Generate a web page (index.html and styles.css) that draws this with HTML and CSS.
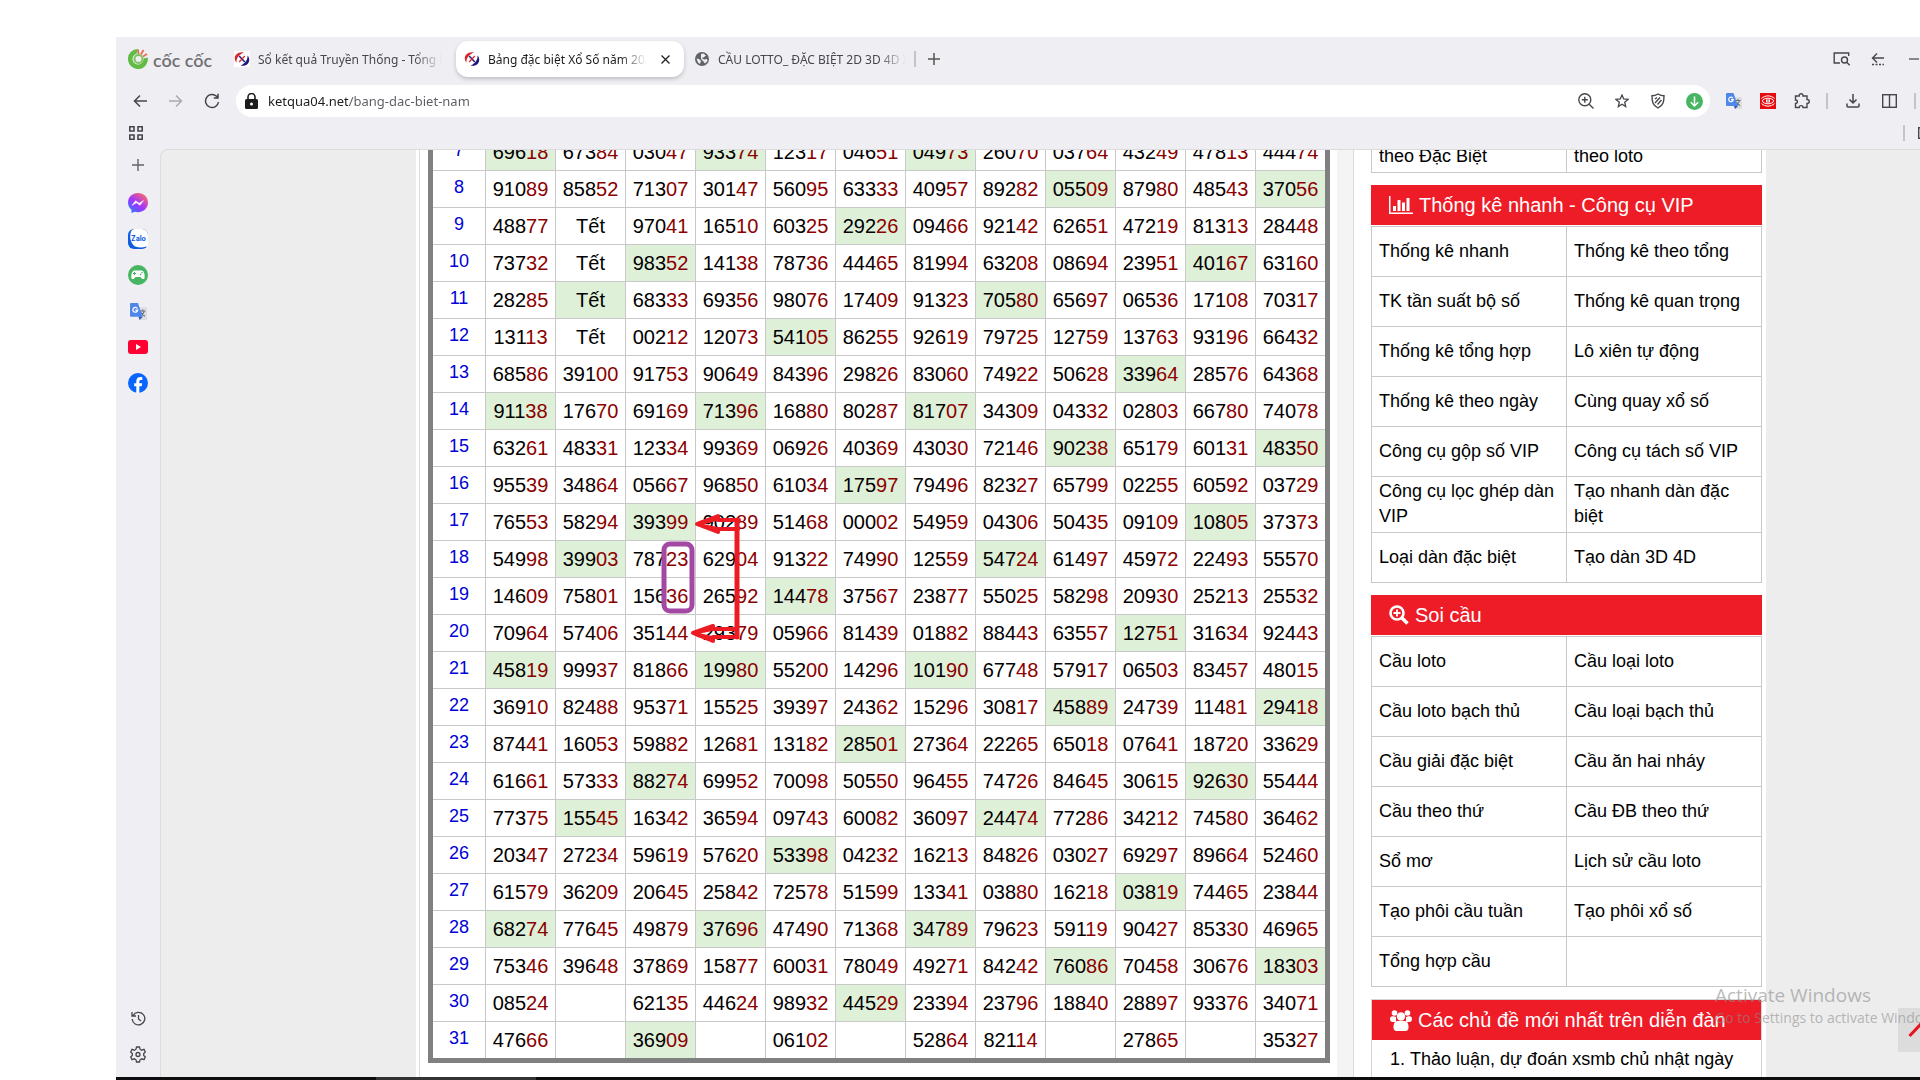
FILE: index.html
```html
<!DOCTYPE html>
<html lang="vi">
<head>
<meta charset="utf-8">
<title>Bảng đặc biệt Xổ Số năm</title>
<link rel="stylesheet" href="styles.css">
</head>
<body>
<svg class="sprite" aria-hidden="true">
  <symbol id="translate" viewBox="0 0 16 16">
    <path d="M6 4h9a1 1 0 0 1 1 1v10a1 1 0 0 1-1 1H9z" fill="#dcdde0"/>
    <path d="M9.500 7.500h5M12 6v1.500M13.500 7.500c-.5 2.500-2 4-3.500 5M10.500 9c.8 1.500 2 2.800 3.500 3.500" stroke="#6b7078" stroke-width="1.100" fill="none"/>
    <path d="M1 0h6.500L12 13H1a1 1 0 0 1-1-1V1a1 1 0 0 1 1-1z" fill="#4f86ec"/>
    <path d="M8 13h4l-3 3z" fill="#2f55b8"/>
    <path d="M7 5.200A2.300 2.300 0 1 0 7.300 6.700H5" stroke="#fff" stroke-width="1.200" fill="none"/>
  </symbol>
  <symbol id="kq" viewBox="0 0 16 16">
    <rect width="16" height="16" fill="#fff"/>
    <path d="M10 1.500C5 0 .5 3.500.8 7.500c0 1.500.7 3 1.700 4C2 8 4.500 3.500 10 1.500z" fill="#d8262c"/>
    <path d="M6.500 14.500c5 1.500 9-2 8.700-6 0-1.500-.7-3-1.700-4C14 8 11.500 12.500 6.500 14.500z" fill="#1f1a78"/>
    <path d="M5.200 5l5.600 6" stroke="#2b2580" stroke-width="1.600"/><path d="M10.800 5l-5.600 6" stroke="#d8262c" stroke-width="1.200"/>
  </symbol>
</svg>
<div class="browser">
  <header class="chrome">
    <div class="tabs">
      <div class="brand">
        <svg width="20" height="20" viewBox="0 0 20 20"><path d="M10 0a10 10 0 1 0 9.800 8.500l-4.300 1A5.500 5.500 0 1 1 8.500 4.700z" fill="#62bb46"/><circle cx="10.500" cy="10" r="4" fill="none" stroke="#7cc55d" stroke-width="2"/><path d="M10.500 5L10 .5M13 5.500L15.500 1M15 7.500l4-2.500" stroke="#ee6b4d" stroke-width="1.800"/></svg>
        <span class="brand-name">cốc cốc</span>
      </div>
      <a class="tab" href="#"><svg width="16" height="16"><use href="#kq"/></svg><span class="tab-title">Sổ kết quả Truyền Thống - Tổng hợp</span></a>
      <a class="tab tab-active" href="#"><svg width="16" height="16"><use href="#kq"/></svg><span class="tab-title">Bảng đặc biệt Xổ Số năm 2024</span>
        <svg class="tab-close" width="9" height="9" viewBox="0 0 9 9"><path d="M.5.5l8 8M8.500.5l-8 8" stroke="#222" stroke-width="1.300"/></svg></a>
      <a class="tab tab-last" href="#"><svg width="14" height="14" viewBox="0 0 14 14"><circle cx="7" cy="7" r="7" fill="#5f6368"/><path d="M1.500 6.500l2.500.5 2 2-1 3-2-1.500zM6 2l2.500-.5L11 3.500 8.500 5.500l-2 .5L9 7.500 12 7l.5 2-2.500 2.500-1.500-2L6 7z" fill="#efeef3"/></svg><span class="tab-title">CẦU LOTTO_ ĐẶC BIỆT 2D 3D 4D XSMB</span></a>
      <span class="bar"></span>
      <button class="icon-btn" aria-label="Thẻ mới"><svg width="12" height="12" viewBox="0 0 12 12"><path d="M6 0v12M0 6h12" stroke="#555" stroke-width="1.500"/></svg></button>
      <div class="window-tools">
        <button class="icon-btn" aria-label="Tìm thẻ"><svg width="18" height="14" viewBox="0 0 18 14" fill="none" stroke="#45474d" stroke-width="1.400"><path d="M7 11H1.200V1h14.500v3"/><circle cx="11.500" cy="8" r="3"/><path d="M13.700 10.200l3 3"/></svg></button>
        <button class="icon-btn" aria-label="Thu gọn"><svg width="14" height="14" viewBox="0 0 14 14" fill="none" stroke="#45474d" stroke-width="1.400"><path d="M13 6H1.500M6 1.500L1.500 6 6 10.500"/><path d="M1 12.500h12" stroke-dasharray="2 1.500"/></svg></button>
        <button class="icon-btn" aria-label="Thu nhỏ"><svg width="10" height="2"><path d="M0 1h10" stroke="#222" stroke-width="1"/></svg></button>
      </div>
    </div>
    <div class="toolbar">
      <button class="icon-btn" aria-label="Quay lại"><svg width="14" height="12" viewBox="0 0 14 12" fill="none" stroke="#45474d" stroke-width="1.500"><path d="M14 6H1.500M7 .5L1.500 6 7 11.500"/></svg></button>
      <button class="icon-btn" aria-label="Tiến"><svg width="14" height="12" viewBox="0 0 14 12" fill="none" stroke="#a9aaae" stroke-width="1.500"><path d="M0 6h12.500M7 .5L12.500 6 7 11.500"/></svg></button>
      <button class="icon-btn" aria-label="Tải lại"><svg width="16" height="16" viewBox="0 0 16 16" fill="none" stroke="#45474d" stroke-width="1.500"><path d="M14.500 9A6.500 6.500 0 1 1 12.500 3.300L14 5M14 .8V5H9.800"/></svg></button>
      <div class="address">
        <svg width="13" height="16" viewBox="0 0 13 16"><rect y="6" width="13" height="10" rx="1.500" fill="#1c1c1f"/><path d="M3 6V4a3.500 3.500 0 0 1 7 0v2" fill="none" stroke="#1c1c1f" stroke-width="1.600"/><circle cx="6.500" cy="11" r="1.500" fill="#fff"/></svg>
        <input class="url" type="text" value="ketqua04.net/bang-dac-biet-nam" aria-label="Địa chỉ">
        <button aria-label="Thu phóng"><svg width="16" height="16" viewBox="0 0 16 16" fill="none" stroke="#45474d" stroke-width="1.400"><circle cx="6.800" cy="6.800" r="6"/><path d="M11.200 11.200l4.300 4.300M3.800 6.800h6M6.800 3.800v6"/></svg></button>
        <button aria-label="Đánh dấu"><svg width="14" height="14" viewBox="0 0 14 14" fill="none" stroke="#45474d" stroke-width="1.300"><path d="M7 1l1.700 4 4.300.4-3.300 2.800 1 4.300L7 10.200l-3.700 2.300 1-4.300L1 5.400 5.300 5z"/></svg></button>
        <button aria-label="Bảo vệ"><svg width="14" height="16" viewBox="0 0 14 16" fill="none" stroke="#45474d" stroke-width="1.400"><path d="M7 1c2 1.300 4 1.800 6 1.800 0 5.700-.5 9.200-6 12.200C1.500 12 1 8.500 1 2.800 3 2.800 5 2.300 7 1z"/><path d="M4 6l2-1.500M4 10l5-5.500M6.500 11.500L10.500 7"/></svg></button>
        <button aria-label="Tải video"><svg width="17" height="17" viewBox="0 0 17 17"><circle cx="8.500" cy="8.500" r="8.500" fill="#47b562"/><path d="M8.500 3.500v9.500M4.800 9.300l3.700 3.700 3.700-3.700" fill="none" stroke="#fff" stroke-width="1.500"/></svg></button>
      </div>
      <div class="extensions">
        <button aria-label="Dịch"><svg width="16" height="16"><use href="#translate"/></svg></button>
        <button aria-label="Tiện ích"><svg width="16" height="16" viewBox="0 0 16 16"><rect width="16" height="16" fill="#e60b0e"/><g fill="none" stroke="#fff"><path d="M1.500 5.500C5 2 11 2 14.500 5.500M1.500 10.500c3.500 3.500 9.500 3.500 13 0"/><ellipse cx="8" cy="8" rx="5.500" ry="2.800"/><path d="M6.500 6.500v3M8 6v4M9.500 6.500v3"/></g></svg></button>
        <button aria-label="Tiện ích mở rộng"><svg width="16" height="16" viewBox="0 0 16 16" fill="none" stroke="#45474d" stroke-width="1.400"><path d="M1.500 3h3.700c-.3-3 4.100-3 3.800 0h4v3.500c3 0 3 4 0 4v4H9c0-2.500-3.800-2.500-3.800 0H1.500v-4c2.500 0 2.500-3.500 0-3.500z"/></svg></button>
      </div>
      <span class="bar"></span>
      <button class="icon-btn" aria-label="Tải xuống"><svg width="14" height="14" viewBox="0 0 14 14" fill="none" stroke="#45474d" stroke-width="1.500"><path d="M7 0v8.500M3.500 5.500L7 9l3.500-3.500M1 9.500V12a1 1 0 0 0 1 1h10a1 1 0 0 0 1-1V9.500"/></svg></button>
      <button class="icon-btn" aria-label="Chia màn hình"><svg width="15" height="14" viewBox="0 0 15 14" fill="none" stroke="#45474d" stroke-width="1.400"><rect x=".7" y=".7" width="13.600" height="12.600"/><path d="M7.500 0v14"/></svg></button>
      <span class="bar"></span>
    </div>
    <div class="bookmarks">
      <svg width="14" height="14" viewBox="0 0 14 14" fill="none" stroke="#45474d" stroke-width="1.600"><path d="M.8.800h4.200V5H.8zM9 .8h4.200V5H9zM.8 9h4.200v4.200H.8zM9 9h4.200v4.200H9z"/></svg>
      <span class="bar"></span>
      <svg width="2" height="12" viewBox="0 0 2 12"><path d="M4 .7H.7v10.600H4" fill="none" stroke="#45474d" stroke-width="1.400"/></svg>
    </div>
  </header>
  <div class="work">
    <nav class="dock" aria-label="Thanh bên">
      <button aria-label="Thêm"><svg width="12" height="12" viewBox="0 0 12 12"><path d="M6 0v12M0 6h12" stroke="#666" stroke-width="1.400"/></svg></button>
      <button aria-label="Messenger"><svg width="20" height="20" viewBox="0 0 20 20"><defs><linearGradient id="msg" x1="0" y1="1" x2=".8" y2="0"><stop offset="0" stop-color="#1787ff"/><stop offset=".5" stop-color="#a033ff"/><stop offset="1" stop-color="#ff6968"/></linearGradient></defs><path d="M10 0c6 0 10 4.300 10 9.600s-4 9.600-10 9.600c-1 0-2-.2-3-.5L3.500 20V16.800C1.200 15 0 12.500 0 9.600 0 4.300 4 0 10 0z" fill="url(#msg)"/><path d="M4 12.300L7.600 7.700l3.500 2.600 4.400-2.700-3.500 4.700-3.500-2.600z" fill="#fff" stroke="#fff" stroke-width=".5"/></svg></button>
      <button aria-label="Zalo"><svg width="20" height="20" viewBox="0 0 20 20"><rect width="20" height="20" rx="6" fill="#0f5ce0"/><path d="M6 0h8a6 6 0 0 1 6 6v11c-3 1.500-8 2-13 .5C3 15 .5 8 3.500 1.500z" fill="#fff"/><text x="3" y="12" class="zalo">Zalo</text></svg></button>
      <button aria-label="Trò chơi"><svg width="20" height="20" viewBox="0 0 20 20"><circle cx="10" cy="10" r="10" fill="#47b562"/><path d="M6 5.500h8c2.500 1 3 5 2.500 8-1.500 1.500-3 0-4-1.500h-5c-1 1.500-2.500 3-4 1.500-.5-3 0-7 2.500-8z" fill="#fff"/><path d="M5 8.500h3M6.500 7v3" stroke="#47b562"/><circle cx="12.500" cy="9.500" r=".8" fill="#47b562"/><circle cx="14" cy="7.800" r=".8" fill="#47b562"/></svg></button>
      <button aria-label="Google Dịch"><svg width="17" height="17"><use href="#translate"/></svg></button>
      <button aria-label="YouTube"><svg width="20" height="14" viewBox="0 0 20 14"><rect width="20" height="14" rx="3" fill="#ff0033"/><path d="M8 4l5 3-5 3z" fill="#fff"/></svg></button>
      <button aria-label="Facebook"><svg width="20" height="20" viewBox="0 0 20 20"><circle cx="10" cy="10" r="10" fill="#0866ff"/><path d="M8.300 20v-6.800H6.200v-3h2.100V8.500c0-3 1.700-4.400 4.100-4.400.8 0 1.500.1 1.900.2v2.700h-1.300c-1.300 0-1.700.7-1.700 1.700v1.500h2.900l-.5 3h-2.400V20z" fill="#fff"/></svg></button>
      <button class="dock-bottom" aria-label="Lịch sử"><svg width="15" height="15" viewBox="0 0 15 15" fill="none" stroke="#45474d" stroke-width="1.300"><path d="M2 4.500A6.300 6.300 0 1 1 1.200 8M1 1v4h4M7.500 4v4l2.500 2"/></svg></button>
      <button aria-label="Cài đặt"><svg width="16" height="17" viewBox="0 0 16 17" fill="none" stroke="#45474d" stroke-width="1.300"><path d="M6.500 1h3l.5 2.200 1.700 1L14 3.400 15.300 6l-1.600 1.500v2l1.600 1.500-1.300 2.600-2.300-.8-1.700 1L9.500 16h-3L6 13.800l-1.700-1-2.300.8L.7 11l1.600-1.500v-2L.7 6 2 3.400l2.300.8 1.700-1z"/><circle cx="8" cy="8.500" r="2"/></svg></button>
    </nav>
    <div class="viewport">
      <div class="page">
        <main class="main">
          <div class="year-wrap">
            <table class="year">
              <colgroup><col class="col-day"><col span="11"><col class="col-end"></colgroup>
              <tbody id="year-body"></tbody>
            </table>
            <svg class="marks" width="90" height="136" viewBox="658 510 90 136" fill="none">
              <rect x="664" y="544" width="28" height="67" rx="6" stroke="#a349a4" stroke-width="5"/>
              <g stroke="#ed1c24" stroke-width="4" stroke-linejoin="round" stroke-linecap="round">
                <path d="M739 520H718v-4l-21 8 21 8v-3h20"/>
                <path d="M737 520v117" stroke-width="5"/>
                <path d="M737 637H713v4l-20-8 20-7v3h24"/>
                <path d="M700 523l16-4M703 526l14 3M697 632l15-3M698 635l14 3"/>
              </g>
            </svg>
          </div>
        </main>
        <aside class="side">
          <table class="links links-top">
            <tr><td><a href="#">theo Đặc Biệt</a></td><td><a href="#">theo loto</a></td></tr>
          </table>
          <section class="card">
            <h2><svg width="24" height="18" viewBox="0 0 24 18" fill="#fff"><path d="M0 0h1.500v16.500H24V18H0z"/><path d="M4 10h3v5H4zM8.500 4h3v11h-3zM13 6.500h3V15h-3zM17.500 2h3v13h-3z"/></svg>Thống kê nhanh - Công cụ VIP</h2>
            <table class="links">
              <tr><td><a href="#">Thống kê nhanh</a></td><td><a href="#">Thống kê theo tổng</a></td></tr>
              <tr><td><a href="#">TK tần suất bộ số</a></td><td><a href="#">Thống kê quan trọng</a></td></tr>
              <tr><td><a href="#">Thống kê tổng hợp</a></td><td><a href="#">Lô xiên tự động</a></td></tr>
              <tr><td><a href="#">Thống kê theo ngày</a></td><td><a href="#">Cùng quay xổ số</a></td></tr>
              <tr><td><a href="#">Công cụ gộp số VIP</a></td><td><a href="#">Công cụ tách số VIP</a></td></tr>
              <tr><td><a href="#">Công cụ lọc ghép dàn VIP</a></td><td><a href="#">Tạo nhanh dàn đặc biệt</a></td></tr>
              <tr><td><a href="#">Loại dàn đặc biệt</a></td><td><a href="#">Tạo dàn 3D 4D</a></td></tr>
            </table>
          </section>
          <section class="card">
            <h2><svg width="20" height="20" viewBox="0 0 20 20" fill="none" stroke="#fff"><circle cx="8" cy="8" r="6.500" stroke-width="2.600"/><path d="M13 13l5.500 5.500" stroke-width="3.500"/><path d="M4.500 8h7M8 4.500v7" stroke-width="1.800"/></svg>Soi cầu</h2>
            <table class="links">
              <tr><td><a href="#">Cầu loto</a></td><td><a href="#">Cầu loại loto</a></td></tr>
              <tr><td><a href="#">Cầu loto bạch thủ</a></td><td><a href="#">Cầu loại bạch thủ</a></td></tr>
              <tr><td><a href="#">Cầu giải đặc biệt</a></td><td><a href="#">Cầu ăn hai nháy</a></td></tr>
              <tr><td><a href="#">Cầu theo thứ</a></td><td><a href="#">Cầu ĐB theo thứ</a></td></tr>
              <tr><td><a href="#">Sổ mơ</a></td><td><a href="#">Lịch sử cầu loto</a></td></tr>
              <tr><td><a href="#">Tạo phôi cầu tuần</a></td><td><a href="#">Tạo phôi xổ số</a></td></tr>
              <tr><td><a href="#">Tổng hợp cầu</a></td><td></td></tr>
            </table>
          </section>
          <section class="card card-boxed">
            <h2><svg width="22" height="21" viewBox="0 0 22 21" fill="#fff"><circle cx="4.500" cy="3" r="2.800"/><circle cx="17.500" cy="3" r="2.800"/><path d="M0 8.500C0 6.500 2 6 4 6.300l2 1V12H2.500C1 12 0 11 0 8.500zM22 8.500c0-2-2-2.500-4-2.200l-2 1V12h3.500c1.500 0 2.500-1 2.500-3.500z"/><circle cx="11" cy="6.500" r="4.200"/><path d="M3.500 17.500C3.500 13 5 11 8 11h6c3 0 4.500 2 4.500 6.500 0 2-1 3.500-3 3.500h-9c-2 0-3-1.500-3-3.500z"/></svg>Các chủ đề mới nhất trên diễn đàn</h2>
            <ol><li><a href="#">Thảo luận, dự đoán xsmb chủ nhật ngày</a></li></ol>
          </section>
        </aside>
      </div>
    </div>
  </div>
  <button class="to-top" aria-label="Lên đầu trang"><svg width="24" height="16" viewBox="0 0 24 16"><path d="M1.500 14L12 3l10.500 11" fill="none" stroke="#e8131a" stroke-width="3"/></svg></button>
  <div class="watermark"><p class="wm-title">Activate Windows</p><p class="wm-text">Go to Settings to activate Windows.</p></div>
</div>
<footer class="taskbar"><span></span></footer>
<script src="year.js"></script>
</body>
</html>
```
FILE: styles.css
```css
* { box-sizing: border-box; }
body {
  margin: 0;
  height: 100vh;
  padding: 37px 0 0 116px;
  display: flex;
  flex-direction: column;
  overflow: hidden;
  background: #fff;
  color: #000;
  font-family: "Liberation Sans", Arial, sans-serif;
}
a { color: inherit; text-decoration: none; }
svg { display: block; flex: none; }
.sprite { position: absolute; width: 0; height: 0; }
button {
  padding: 0;
  border: 0;
  background: none;
  display: flex;
  align-items: center;
  justify-content: center;
}
.browser {
  position: relative;
  flex: 1;
  min-height: 0;
  display: flex;
  flex-direction: column;
  overflow: hidden;
  background: #efeef3;
}
.chrome { font-family: "Noto Sans", sans-serif; font-size: 12px; color: #45474d; }
.bar { flex: none; width: 2px; height: 16px; background: #c4c4c8; }
.icon-btn { flex: none; width: 36px; height: 32px; }

.tabs { height: 48px; display: flex; align-items: center; padding-bottom: 4px; }
.brand { display: flex; align-items: center; gap: 5px; width: 110px; padding-left: 12px; }
.brand-name { font: 600 18px/20px Lato, sans-serif; color: #6f7175; padding-top: 2px; }
.tab {
  display: flex;
  align-items: center;
  gap: 8px;
  width: 230px;
  height: 36px;
  padding: 0 14px 0 8px;
  border-radius: 12px;
}
.tab-title {
  flex: 1;
  overflow: hidden;
  white-space: nowrap;
  -webkit-mask-image: linear-gradient(to left, transparent, #000 28px);
  mask-image: linear-gradient(to left, transparent, #000 28px);
}
.tab-active { background: #fff; color: #1c1c1f; width: 228px; box-shadow: 0 2px 4px rgba(0, 0, 0, .2); }
.tab-close { margin-left: 6px; }
.tab-last { gap: 9px; padding-left: 11px; padding-right: 8px; }
.window-tools { margin-left: auto; margin-right: -12px; display: flex; align-items: center; }

.toolbar { height: 32px; display: flex; align-items: center; padding: 0 4px 0 6px; }
.address {
  flex: 1;
  height: 32px;
  margin-left: 6px;
  padding: 0 4px 0 9px;
  display: flex;
  align-items: center;
  gap: 12px;
  border-radius: 16px;
  background: #fff;
}
.address button { width: 24px; height: 24px; }
.url {
  flex: 1;
  border: 0;
  padding: 0;
  margin-left: -2px;
  outline: none;
  font: 13px/20px "Noto Sans", sans-serif;
  color: transparent;
  background: linear-gradient(to right, #1c1c1f 80px, #5a5c62 80px);
  -webkit-background-clip: text;
  background-clip: text;
}
.extensions { display: flex; padding-left: 7px; }
.extensions button { width: 34px; height: 32px; }
.toolbar .bar { margin: 0 7px; }
.toolbar .bar:last-child { margin-right: 0; }

.bookmarks { height: 32px; display: flex; align-items: center; padding-left: 13px; }
.bookmarks .bar { margin-left: auto; margin-right: 13px; }

.work { flex: 1; min-height: 0; display: flex; }
.dock { flex: none; width: 44px; display: flex; flex-direction: column; padding-bottom: 5px; }
.dock button { height: 36px; }
.dock button:first-child { padding-bottom: 4px; }
.dock .dock-bottom { margin-top: auto; }
.zalo { font: 700 7px Inter, sans-serif; fill: #0f5ce0; }
.viewport {
  flex: 1;
  min-width: 0;
  overflow: hidden;
  border-top: 1px solid #dcdcde;
  border-left: 1px solid #dcdcde;
  border-top-left-radius: 8px;
  background: #ededed;
  padding-left: 255px;
}
.page { display: flex; min-height: 100%; max-width: 1350px; background: #fff; }
.main {
  flex: 1;
  min-width: 0;
  margin-left: 3px;
  border-left: 1px solid #dcdcdc;
  padding: 0 7px 0 8px;
}
.year-wrap { position: relative; margin-top: -22px; }
.year {
  width: 100%;
  table-layout: fixed;
  border: 5px solid #808080;
  border-spacing: 0;
}
.col-day { width: 53px; }
.col-end { width: 69px; }
.year th, .year td {
  height: 37px;
  padding: 0;
  text-align: center;
  border-top: 1px solid #c8c8c8;
  border-right: 1px solid #c8c8c8;
  font-size: 20px;
  line-height: 24px;
}
.year th {
  padding-bottom: 4px;
  font-size: 18px;
  font-weight: 400;
  color: #0000d8;
}
.year td:last-child { border-right: 0; }
.year .hit { background: #dff0d8; }
.year span { color: #8b0000; }
.marks { position: absolute; left: 230px; top: 382px; }

.side {
  flex: none;
  width: 429px;
  border-left: 16px solid #f4f4f4;
  padding: 0 4px 0 18px;
  box-shadow: inset 1px 0 #dcdcdc;
}
.links {
  width: 100%;
  table-layout: fixed;
  border-spacing: 0;
  border: solid #c8c8c8;
  border-width: 0 0 1px 1px;
  font-size: 18px;
  line-height: 25px;
}
.links td {
  height: 50px;
  padding: 2px 7px 3px;
  border-top: 1px solid #c8c8c8;
  border-right: 1px solid #c8c8c8;
}
.links-top { margin-top: -28px; }
.links-top td { vertical-align: bottom; }
.card { margin-top: 12px; }
.card h2 {
  height: 40px;
  margin: 0 0 1px;
  padding-left: 18px;
  display: flex;
  align-items: center;
  gap: 6px;
  background: #ed1c27;
  color: #fff;
  font-size: 20px;
  font-weight: 400;
}
.card-boxed { border: 1px solid #d4d4d4; height: 200px; }
.card-boxed ol {
  margin: 0;
  padding: 6px 0 0 38px;
  font-size: 18px;
  line-height: 25px;
}

.to-top {
  position: absolute;
  right: -22px;
  bottom: 25px;
  width: 44px;
  height: 44px;
  background: #dcdcdc;
}
.watermark {
  position: absolute;
  right: -41px;
  bottom: 48px;
  width: 246px;
  color: rgba(140, 140, 140, .6);
  font-family: "Open Sans", sans-serif;
  white-space: nowrap;
}
.watermark p { margin: 0; }
.wm-title { font-size: 19px; line-height: 24px; }
.wm-text { font-size: 14px; line-height: 22px; }
.taskbar { flex: none; height: 3px; background: #0d0d0f; padding-left: 260px; }
.taskbar span { display: block; width: 160px; height: 3px; background: #333; }
```
FILE: year.js
```js
// One line per day: twelve monthly results; * marks a highlighted cell, - an empty one.
const days = `
7 69618* 67384 03047 93374* 12317 04651 04973* 26070 03764 43249 47813 44474
8 91089 85852 71307 30147 56095 63333 40957 89282 05509* 87980 48543 37056*
9 48877 Tết 97041 16510 60325 29226* 09466 92142 62651 47219 81313 28448
10 73732 Tết 98352* 14138 78736 44465 81994 63208 08694 23951 40167* 63160
11 28285 Tết* 68333 69356 98076 17409 91323 70580* 65697 06536 17108 70317
12 13113 Tết 00212 12073 54105* 86255 92619 79725 12759 13763 93196 66432
13 68586 39100 91753 90649 84396 29826 83060 74922 50628 33964* 28576 64368
14 91138* 17670 69169 71396* 16880 80287 81707* 34309 04332 02803 66780 74078
15 63261 48331 12334 99369 06926 40369 43030 72146 90238* 65179 60131 48350*
16 95539 34864 05667 96850 61034 17597* 79496 82327 65799 02255 60592 03729
17 76553 58294 39399* 90289 51468 00002 54959 04306 50435 09109 10805* 37373
18 54998 39903* 78723 62904 91322 74990 12559 54724* 61497 45972 22493 55570
19 14609 75801 15636 26592 14478* 37567 23877 55025 58298 20930 25213 25532
20 70964 57406 35144 29379 05966 81439 01882 88443 63557 12751* 31634 92443
21 45819* 99937 81866 19980* 55200 14296 10190* 67748 57917 06503 83457 48015
22 36910 82488 95371 15525 39397 24362 15296 30817 45889* 24739 11481 29418*
23 87441 16053 59882 12681 13182 28501* 27364 22265 65018 07641 18720 33629
24 61661 57333 88274* 69952 70098 50550 96455 74726 84645 30615 92630* 55444
25 77375 15545* 16342 36594 09743 60082 36097 24474* 77286 34212 74580 36462
26 20347 27234 59619 57620 53398* 04232 16213 84826 03027 69297 89664 52460
27 61579 36209 20645 25842 72578 51599 13341 03880 16218 03819* 74465 23844
28 68274* 77645 49879 37696* 47490 71368 34789* 79623 59119 90427 85330 46965
29 75346 39648 37869 15877 60031 78049 49271 84242 76086* 70458 30676 18303*
30 08524 - 62135 44624 98932 44529* 23394 23796 18840 28897 93376 34071
31 47666 - 36909* - 06102 - 52864 82114 - 27865 - 35327`;

const body = document.getElementById('year-body');
for (const line of days.trim().split('\n')) {
  const [day, ...results] = line.split(' ');
  const row = body.insertRow();
  const head = document.createElement('th');
  head.scope = 'row';
  head.textContent = day;
  row.append(head);
  for (const result of results) {
    const cell = row.insertCell();
    const value = result.replace(/[*-]/g, '');
    if (result.endsWith('*')) cell.className = 'hit';
    if (/^\d/.test(value)) {
      const tail = document.createElement('span');
      tail.textContent = value.slice(3);
      cell.append(value.slice(0, 3), tail);
    } else {
      cell.textContent = value;
    }
  }
}
```
